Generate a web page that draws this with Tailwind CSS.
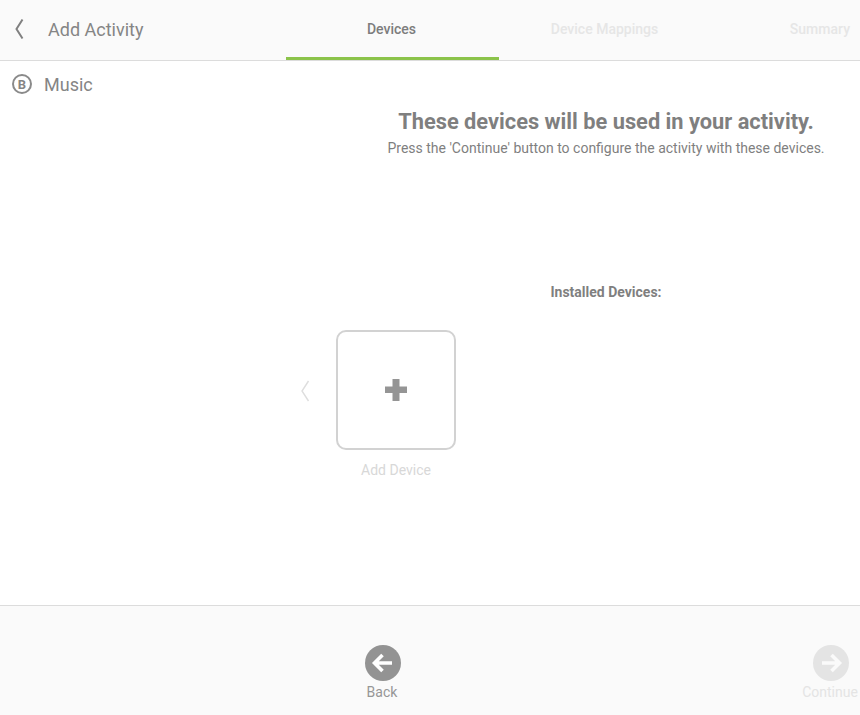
<!DOCTYPE html>
<html lang="en">
<head>
  <meta charset="UTF-8">
  <title>Add Activity</title>
  <script src="https://cdn.jsdelivr.net/npm/@tailwindcss/browser@4"></script>
</head>
<body class="bg-white h-[715px] w-[860px] overflow-hidden flex flex-col font-['Roboto',sans-serif] text-[#858585]">

  <!-- Header -->
  <header class="h-[61px] shrink-0 bg-[#fafafa] border-b border-[#dcdcdc] flex">
    <div class="w-[286px] flex items-center">
      <svg class="w-[10px] h-[22px] ml-[14px] mt-[-3px]" viewBox="0 0 10 22" fill="none" stroke="#808080" stroke-width="2"><path d="M8.5 1.5L2.5 11l6 9.5"/></svg>
      <span class="ml-[24px] text-[18px] mt-[-1px]">Add Activity</span>
    </div>
    <div class="w-[213px] h-[60px] border-b-[3px] border-[#8bc34a] flex items-center justify-center text-sm font-medium text-[#7d7d7d] pr-[2px]">Devices</div>
    <div class="w-[213px] h-[60px] flex items-center justify-center text-sm font-medium text-[#e6e6e6] pr-[2px] pb-[3px]">Device Mappings</div>
    <div class="flex-1 h-[60px] flex items-center justify-end pr-[10px] text-sm font-medium text-[#e6e6e6] pb-[3px]">Summary</div>
  </header>

  <!-- Content -->
  <main class="flex-1 flex min-h-0">
    <aside class="w-[352px] shrink-0 pl-[12px] pt-[12px]">
      <div class="flex items-center h-[22px]">
        <span class="w-5 h-5 rounded-full border-[2.5px] border-[#8a8a8a] flex items-center justify-center text-[13px] font-bold text-[#858585] leading-none">B</span>
        <span class="ml-[12px] text-[18px]">Music</span>
      </div>
    </aside>
    <section class="flex-1 flex flex-col items-center">
      <h1 class="mt-[47px] text-[21.8px] leading-[28px] font-bold text-[#7f7f7f]">These devices will be used in your activity.</h1>
      <p class="mt-[2px] text-sm leading-[20px] text-[#7f7f7f]">Press the 'Continue' button to configure the activity with these devices.</p>
      <p class="mt-[124px] text-sm leading-[20px] font-bold text-[#7f7f7f]">Installed Devices:</p>
    </section>
  </main>

  <!-- Footer -->
  <footer class="h-[110px] shrink-0 bg-[#fafafa] border-t border-[#dcdcdc] flex pt-[39px]">
    <div class="ml-[358px] w-[48px] flex flex-col items-center">
      <svg class="w-9 h-9 ml-[1px]" viewBox="0 0 36 36"><circle cx="18" cy="18" r="18" fill="#939393"/><path d="M27 18H10M17.5 10L9.5 18l8 8" fill="none" stroke="#fff" stroke-width="3.6"/></svg>
      <span class="mt-[1px] text-sm leading-[20px] text-[#969696]">Back</span>
    </div>
    <div class="ml-auto mr-[2px] w-[56px] flex flex-col items-center">
      <svg class="w-9 h-9 ml-[1px]" viewBox="0 0 36 36"><circle cx="18" cy="18" r="18" fill="#e4e4e4"/><path d="M9 18h17M18.5 10l8 8-8 8" fill="none" stroke="#fafafa" stroke-width="3.6"/></svg>
      <span class="mt-[1px] text-sm leading-[20px] text-[#e4e4e4]">Continue</span>
    </div>
  </footer>

  <!-- Device carousel sits over the content columns -->
  <div class="absolute left-[300px] top-[330px] flex items-start">
    <svg class="w-[10px] h-[22px] mt-[50px]" viewBox="0 0 10 22" fill="none" stroke="#dedede" stroke-width="1.4"><path d="M8.5 1L2 11l6.5 10"/></svg>
    <div class="ml-[26px] flex flex-col items-center">
      <div class="w-[120px] h-[120px] rounded-[10px] border-2 border-[#d2d2d2] flex items-center justify-center">
        <svg class="w-[22px] h-[22px]" viewBox="0 0 22 22" fill="#959595"><path d="M7.5 0h7v7.5H22v6.5h-7.5V22h-7v-8H0V7.5h7.5z"/></svg>
      </div>
      <span class="mt-[10px] text-sm leading-[20px] text-[#d8d8d8]">Add Device</span>
    </div>
  </div>
</body>
</html>
